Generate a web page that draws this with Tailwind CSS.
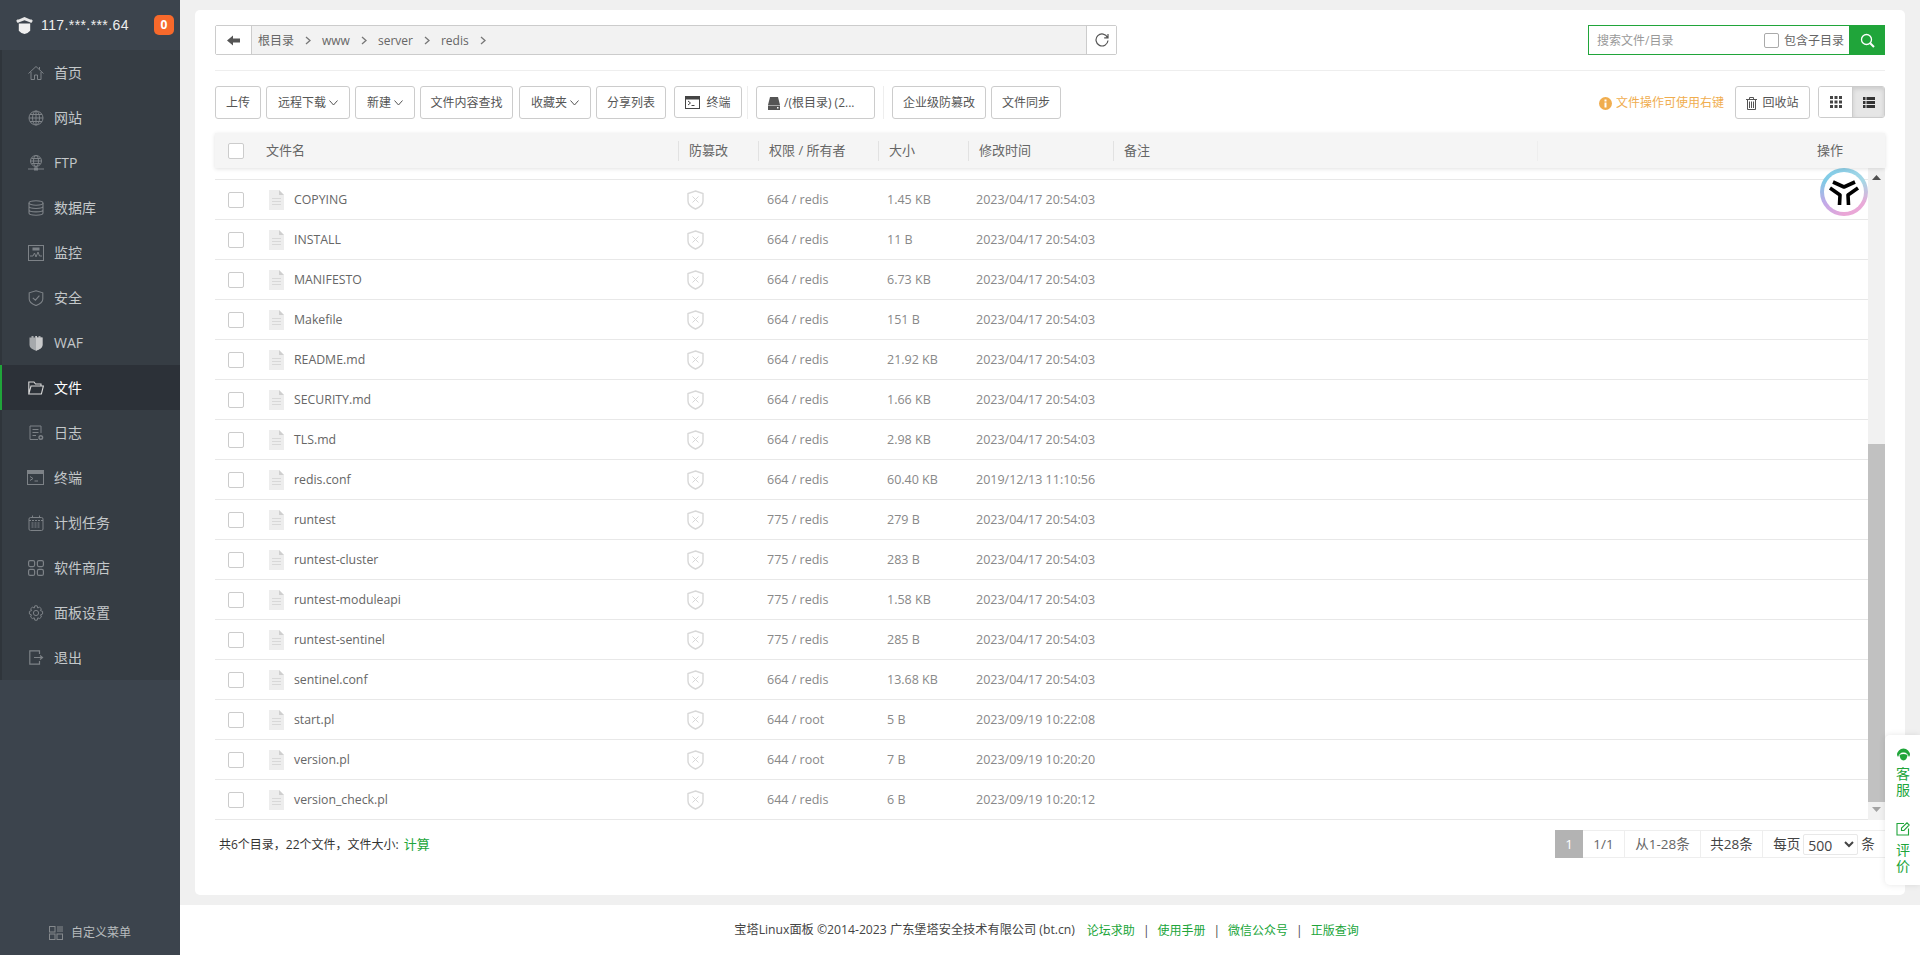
<!DOCTYPE html>
<html lang="en">

<head>
  <meta charset="UTF-8" />
  <title>宝塔Linux面板</title>
  <script src="https://cdn.jsdelivr.net/npm/@tailwindcss/browser@4"></script>
</head>

<body class="h-screen overflow-hidden flex bg-white text-xs text-[#555] font-['Open_Sans','Noto_Sans_CJK_SC',sans-serif]">

  <!-- Sidebar -->
  <aside class="w-[180px] shrink-0 h-full bg-[#3c444d] flex flex-col">
    <div class="h-[50px] flex items-center pl-[15px] bg-[#3c444d]">
      <svg class="w-[19px] h-[19px]" viewBox="0 0 20 20">
        <path d="M1 5 L10 1 L19 5 L17 7 L10 4.5 L3 7 Z" fill="#e8e8e8" />
        <path d="M3 3.5 V7 M17 3.5 V7" stroke="#e8e8e8" />
        <path d="M4 8 H16 V15.5 Q14 18 10 19 Q6 18 4 15.5 Z" fill="#f0f0f0" />
      </svg>
      <span class="ml-[7px] text-sm tracking-[0.4px] text-[#eee] font-['Liberation_Sans',sans-serif]">117.***.***.64</span>
      <span class="ml-auto mr-[6px] w-[20px] h-[20px] rounded-[5px] bg-[#f7692b] text-white text-xs font-bold flex items-center justify-center">0</span>
    </div>

    <nav class="bg-[#363d44] text-sm text-[#c4c8ca]">
      <a class="h-[45px] flex items-center border-l-2 border-[#2f353b] pl-[26px]">
        <svg class="w-[16px] h-[16px] mr-[10px]" viewBox="0 0 16 16" fill="none" stroke="#7d8287" stroke-width="1">
          <path d="M0.5 8.5 L8 1.5 L15.5 8.5 M3 7 V14.5 H6.5 V10 H9.5 V14.5 H13 V7 M11.5 2 V4.5" />
        </svg>首页</a>
      <a class="h-[45px] flex items-center border-l-2 border-[#2f353b] pl-[26px]">
        <svg class="w-[16px] h-[16px] mr-[10px]" viewBox="0 0 16 16" fill="none" stroke="#7d8287" stroke-width="1">
          <circle cx="8" cy="8" r="7" />
          <ellipse cx="8" cy="8" rx="3.5" ry="7" />
          <path d="M8 1 V15 M1 8 H15 M2 4.5 H14 M2 11.5 H14" />
        </svg>网站</a>
      <a class="h-[45px] flex items-center border-l-2 border-[#2f353b] pl-[26px]">
        <svg class="w-[16px] h-[16px] mr-[10px]" viewBox="0 0 16 16" fill="none" stroke="#7d8287" stroke-width="1">
          <circle cx="8" cy="6" r="5.5" />
          <ellipse cx="8" cy="6" rx="2.5" ry="5.5" />
          <path d="M2.5 6 H13.5 M3.5 3.5 H12.5 M3.5 8.5 H12.5 M8 11.5 V13 M0 14 H16" />
          <rect x="6.5" y="13" width="3" height="2" fill="#7d8287" />
        </svg>FTP</a>
      <a class="h-[45px] flex items-center border-l-2 border-[#2f353b] pl-[26px]">
        <svg class="w-[16px] h-[16px] mr-[10px]" viewBox="0 0 16 16" fill="none" stroke="#7d8287" stroke-width="1.1">
          <ellipse cx="8" cy="3" rx="7" ry="2.2" />
          <path d="M1 3 V13 C1 14.2 4 15.2 8 15.2 C12 15.2 15 14.2 15 13 V3 M1 6.3 C1 7.5 4 8.5 8 8.5 C12 8.5 15 7.5 15 6.3 M1 9.7 C1 10.9 4 11.9 8 11.9 C12 11.9 15 10.9 15 9.7" />
        </svg>数据库</a>
      <a class="h-[45px] flex items-center border-l-2 border-[#2f353b] pl-[26px]">
        <svg class="w-[16px] h-[16px] mr-[10px]" viewBox="0 0 16 16" fill="none" stroke="#7d8287" stroke-width="1">
          <rect x="0.5" y="0.5" width="15" height="15" />
          <path d="M2 11 H5 L6.5 8 L8 12 L10 7 L11.5 11 H14" />
          <rect x="5" y="3" width="6" height="2" fill="#7d8287" />
        </svg>监控</a>
      <a class="h-[45px] flex items-center border-l-2 border-[#2f353b] pl-[26px]">
        <svg class="w-[16px] h-[16px] mr-[10px]" viewBox="0 0 16 16" fill="none" stroke="#7d8287" stroke-width="1.1">
          <path d="M8 0.8 L14.8 2.8 V9 Q14.8 13 8 15.6 Q1.2 13 1.2 9 V2.8 Z M4.8 7.8 L7.4 10.2 L11.4 5.6" />
        </svg>安全</a>
      <a class="h-[45px] flex items-center border-l-2 border-[#2f353b] pl-[26px]">
        <svg class="w-[16px] h-[16px] mr-[10px]" viewBox="0 0 16 16">
          <path d="M1.5 2.5 L3.5 2.5 V1 H5.5 V2.5 H7 V1 H9 V2.5 H10.5 V1 H12.5 V2.5 L14.5 2.5 V10 Q14.5 13.5 8 15.8 Q1.5 13.5 1.5 10 Z" fill="#a6a9ac" />
          <path d="M8 1 H9 V2.5 H14.5 V10 Q14.5 13.5 8 15.8 Z" fill="#c9cacb" />
        </svg>WAF</a>
      <a class="h-[45px] flex items-center border-l-2 border-[#20a53a] pl-[26px] bg-[#2c3138] text-white">
        <svg class="w-[16px] h-[16px] mr-[10px]" viewBox="0 0 16 16" fill="none" stroke="#d8d8d8" stroke-width="1.1">
          <path d="M0.8 14 V2 H6 L7.5 4 H13 V6 M0.8 14 L3 6 H15.4 L13.4 14 Z" />
        </svg>文件</a>
      <a class="h-[45px] flex items-center border-l-2 border-[#2f353b] pl-[26px]">
        <svg class="w-[16px] h-[16px] mr-[10px]" viewBox="0 0 16 16" fill="none" stroke="#7d8287" stroke-width="1">
          <path d="M10 14.5 H2 V1 H13 V8 M4.5 4.5 H10.5 M4.5 7.5 H10.5 M4.5 10.5 H8" />
          <circle cx="12.8" cy="12.5" r="1.8" stroke-width="1.4" />
        </svg>日志</a>
      <a class="h-[45px] flex items-center border-l-2 border-[#2f353b] pl-[25px]">
        <svg class="w-[17px] h-[15px] mr-[10px]" viewBox="0 0 17 15" fill="none" stroke="#7d8287" stroke-width="1">
          <rect x="0.5" y="0.5" width="16" height="14" />
          <rect x="0.5" y="0.5" width="16" height="3" fill="#7d8287" />
          <path d="M3 6.5 L6 8.5 L3 10.5 M7.5 11 H11" />
        </svg>终端</a>
      <a class="h-[45px] flex items-center border-l-2 border-[#2f353b] pl-[26px]">
        <svg class="w-[16px] h-[16px] mr-[10px]" viewBox="0 0 16 16" fill="none" stroke="#7d8287" stroke-width="1">
          <rect x="1" y="2.5" width="14" height="13" rx="1.5" />
          <path d="M4.5 0.5 V3.5 M11.5 0.5 V3.5 M1 5.5 H15 M3.5 8 H12.5 M3.5 10 H12.5 M3.5 12 H12.5" stroke-dasharray="2 1" />
        </svg>计划任务</a>
      <a class="h-[45px] flex items-center border-l-2 border-[#2f353b] pl-[26px]">
        <svg class="w-[16px] h-[16px] mr-[10px]" viewBox="0 0 16 16" fill="none" stroke="#7d8287" stroke-width="1.2">
          <rect x="0.6" y="0.6" width="6" height="6" rx="1.5" />
          <rect x="9.4" y="0.6" width="6" height="6" rx="1.5" />
          <rect x="0.6" y="9.4" width="6" height="6" rx="1.5" />
          <rect x="9.4" y="9.4" width="6" height="6" rx="1.5" />
        </svg>软件商店</a>
      <a class="h-[45px] flex items-center border-l-2 border-[#2f353b] pl-[26px]">
        <svg class="w-[16px] h-[16px] mr-[10px]" viewBox="0 0 16 16" fill="none" stroke="#7d8287" stroke-width="1">
          <circle cx="8" cy="8" r="2.6" />
          <path d="M6.8 0.8 H9.2 L9.7 3 L11.6 2.2 L13.4 3.8 L12.4 5.6 L14.6 6.4 V9 L12.6 9.8 L13.4 12 L11.6 13.6 L9.8 12.8 L9.2 15.2 H6.8 L6.2 12.8 L4.4 13.6 L2.6 12 L3.4 9.8 L1.4 9 V6.4 L3.6 5.6 L2.6 3.8 L4.4 2.2 L6.3 3 Z" />
        </svg>面板设置</a>
      <a class="h-[45px] flex items-center border-l-2 border-[#2f353b] pl-[27px]">
        <svg class="w-[15px] h-[15px] mr-[10px]" viewBox="0 0 15 15" fill="none" stroke="#7d8287" stroke-width="1.2">
          <path d="M10.5 4 V0.8 H0.8 V14.2 H10.5 V11 M5 7.5 H13 M11 5.5 L13.5 7.5 L11 9.5" />
        </svg>退出</a>
    </nav>

    <div class="mt-auto h-[44px] flex items-center justify-center text-xs text-[#b8bcbe]">
      <svg class="w-[14px] h-[14px] mr-[8px]" viewBox="0 0 14 14" fill="none" stroke="#85898d" stroke-width="1">
        <rect x="0.5" y="0.5" width="5.5" height="5.5" />
        <rect x="0.5" y="8" width="5.5" height="5.5" />
        <rect x="8" y="8" width="5.5" height="5.5" />
        <path d="M8 1 H14 M8 3 H14 M8 5 H14" />
      </svg>自定义菜单
    </div>
  </aside>

  <!-- Main -->
  <div class="flex-1 min-w-0 flex flex-col">
    <main class="h-[905px] bg-[#f0f0f0] pt-[10px] pl-[15px] pr-[15px] pb-[10px]">
      <div class="h-full bg-white rounded-[5px] px-5 pt-[15px]">

        <!-- Path bar and search -->
        <div class="flex justify-between h-[30px]">
          <div class="w-[902px] flex border border-[#ccc] rounded-[2px] bg-[#f2f2f2]">
            <button class="w-[36px] bg-white border-r border-[#ccc] flex items-center justify-center">
              <svg class="w-[13px] h-[11px]" viewBox="0 0 13 11" fill="#555">
                <path d="M0 5.5 L6 0.5 V3.5 H13 V7.5 H6 V10.5 Z" />
              </svg>
            </button>
            <div class="flex-1 flex items-center pl-[6px] pt-px text-[#666]">
              <span>根目录</span>
              <svg class="w-[6px] h-[9px] mx-[11px]" viewBox="0 0 6 9" fill="none" stroke="#777" stroke-width="1.3"><path d="M1 1 L5 4.5 L1 8" /></svg>
              <span>www</span>
              <svg class="w-[6px] h-[9px] mx-[11px]" viewBox="0 0 6 9" fill="none" stroke="#777" stroke-width="1.3"><path d="M1 1 L5 4.5 L1 8" /></svg>
              <span>server</span>
              <svg class="w-[6px] h-[9px] mx-[11px]" viewBox="0 0 6 9" fill="none" stroke="#777" stroke-width="1.3"><path d="M1 1 L5 4.5 L1 8" /></svg>
              <span>redis</span>
              <svg class="w-[6px] h-[9px] mx-[11px]" viewBox="0 0 6 9" fill="none" stroke="#777" stroke-width="1.3"><path d="M1 1 L5 4.5 L1 8" /></svg>
            </div>
            <button class="w-[30px] bg-white border-l border-[#ccc] flex items-center justify-center">
              <svg class="w-[14px] h-[14px]" viewBox="0 0 14 14" fill="none" stroke="#555" stroke-width="1.2">
                <path d="M12.5 4.5 A6 6 0 1 0 13 7.5 M13 1 V4.8 H9.2" />
              </svg>
            </button>
          </div>

          <div class="w-[297px] flex">
            <div class="flex-1 flex items-center border border-[#20a53a] border-r-0 pl-[8px] pt-px">
              <span class="flex-1 text-[#999]">搜索文件/目录</span>
              <span class="w-[15px] h-[15px] border border-[#aaa] rounded-[2px] bg-white mr-[5px]"></span>
              <span class="mr-[5px] text-[#666]">包含子目录</span>
            </div>
            <button class="w-[36px] bg-[#20a53a] flex items-center justify-center">
              <svg class="w-[15px] h-[15px]" viewBox="0 0 15 15" fill="none" stroke="#fff" stroke-width="1.3">
                <circle cx="6.5" cy="6.5" r="5" />
                <path d="M10.2 10.2 L14 14" stroke-width="2" />
              </svg>
            </button>
          </div>
        </div>

        <div class="mt-[15px] border-t border-[#eee]"></div>

        <!-- Toolbar -->
        <div class="mt-[15px] h-[33px] flex items-stretch">
          <button class="w-[46px] pt-px border border-[#ccc] rounded-[3px] bg-white text-[#555]">上传</button>
          <button class="ml-[5px] w-[84px] pt-px border border-[#ccc] rounded-[3px] bg-white text-[#555] flex items-center justify-center">远程下载
            <svg class="w-[9px] h-[6px] ml-[3px]" viewBox="0 0 9 6" fill="none" stroke="#555"><path d="M0.5 0.5 L4.5 5 L8.5 0.5" /></svg>
          </button>
          <button class="ml-[5px] w-[60px] pt-px border border-[#ccc] rounded-[3px] bg-white text-[#555] flex items-center justify-center">新建
            <svg class="w-[9px] h-[6px] ml-[3px]" viewBox="0 0 9 6" fill="none" stroke="#555"><path d="M0.5 0.5 L4.5 5 L8.5 0.5" /></svg>
          </button>
          <button class="ml-[5px] w-[93px] pt-px border border-[#ccc] rounded-[3px] bg-white text-[#555]">文件内容查找</button>
          <button class="ml-[6px] w-[72px] pt-px border border-[#ccc] rounded-[3px] bg-white text-[#555] flex items-center justify-center">收藏夹
            <svg class="w-[9px] h-[6px] ml-[3px]" viewBox="0 0 9 6" fill="none" stroke="#555"><path d="M0.5 0.5 L4.5 5 L8.5 0.5" /></svg>
          </button>
          <button class="ml-[5px] w-[70px] pt-px border border-[#ccc] rounded-[3px] bg-white text-[#555]">分享列表</button>
          <button class="ml-[8px] w-[68px] h-[32px] pt-px border border-[#ccc] rounded-[3px] bg-white text-[#555] flex items-center justify-center">
            <svg class="w-[15px] h-[13px] mr-[6px]" viewBox="0 0 15 13" fill="none" stroke="#444">
              <rect x="0.5" y="0.5" width="14" height="12" />
              <rect x="0.5" y="0.5" width="14" height="2.5" fill="#444" />
              <path d="M3 5 L5.5 7 L3 9 M6.5 9.5 H9.5" />
            </svg>终端
          </button>
          <span class="ml-[5px] border-l border-[#eee]"></span>
          <button class="ml-[8px] w-[119px] pt-px border border-[#ccc] rounded-[3px] bg-white text-[#555] flex items-center pl-[11px]">
            <svg class="w-[12px] h-[13px] mr-[4px]" viewBox="0 0 12 13" fill="#555">
              <path d="M2 0 H10 L12 8 H0 Z M0 8.5 H12 V13 H0 Z" />
              <rect x="9" y="10" width="1.5" height="1.5" fill="#fff" />
            </svg>/(根目录) (2...
          </button>
          <span class="ml-[8px] border-l border-[#eee]"></span>
          <button class="ml-[8px] w-[94px] pt-px border border-[#ccc] rounded-[3px] bg-white text-[#555]">企业级防篡改</button>
          <button class="ml-[5px] w-[70px] pt-px border border-[#ccc] rounded-[3px] bg-white text-[#555]">文件同步</button>

          <span class="ml-auto pt-px flex items-center text-[#f0ad4e]">
            <svg class="w-[13px] h-[13px] mr-[4px]" viewBox="0 0 13 13">
              <circle cx="6.5" cy="6.5" r="6.5" fill="#f0ad4e" />
              <rect x="5.5" y="2.5" width="2" height="2" fill="#fff" />
              <rect x="5.5" y="5.5" width="2" height="5" fill="#fff" />
            </svg>文件操作可使用右键
          </span>
          <button class="ml-[11px] w-[75px] pt-px border border-[#ccc] rounded-[3px] bg-white text-[#555] flex items-center justify-center">
            <svg class="w-[11px] h-[13px] mr-[5px]" viewBox="0 0 11 13" fill="none" stroke="#555">
              <path d="M0 2.5 H11 M3.5 2.5 V0.5 H7.5 V2.5 M1.5 2.5 V12.5 H9.5 V2.5 M3.5 4.5 V11 M5.5 4.5 V11 M7.5 4.5 V11" />
            </svg>回收站
          </button>
          <div class="ml-[8px] w-[67px] h-[32px] flex border border-[#ccc] rounded-[3px] overflow-hidden">
            <span class="w-[33px] bg-white flex items-center justify-center">
              <svg class="w-[12px] h-[12px]" viewBox="0 0 12 12" fill="#444">
                <rect width="3" height="3" /><rect x="4.5" width="3" height="3" /><rect x="9" width="3" height="3" />
                <rect y="4.5" width="3" height="3" /><rect x="4.5" y="4.5" width="3" height="3" /><rect x="9" y="4.5" width="3" height="3" />
                <rect y="9" width="3" height="3" /><rect x="4.5" y="9" width="3" height="3" /><rect x="9" y="9" width="3" height="3" />
              </svg>
            </span>
            <span class="flex-1 bg-[#e6e6e6] border-l border-[#ccc] shadow-[inset_0_2px_4px_rgba(0,0,0,0.12)] flex items-center justify-center">
              <svg class="w-[12px] h-[11px]" viewBox="0 0 12 11" fill="#333">
                <rect width="2.5" height="3" /><rect x="3.5" width="8.5" height="3" />
                <rect y="4" width="2.5" height="3" /><rect x="3.5" y="4" width="8.5" height="3" />
                <rect y="8" width="2.5" height="3" /><rect x="3.5" y="8" width="8.5" height="3" />
              </svg>
            </span>
          </div>
        </div>

        <!-- Table header -->
        <div class="relative z-10 mt-[14px] h-[35px] pt-px flex items-center bg-[#f5f5f5] text-[13px] text-[#666] shadow-[0_1px_4px_rgba(0,0,0,0.12)]">
          <div class="w-[463px] flex items-center pl-[13px]">
            <span class="w-[16px] h-[16px] border border-[#ccc] rounded-[2px] bg-white"></span>
            <span class="ml-[22px]">文件名</span>
          </div>
          <div class="w-[80px] h-[20px] flex items-center border-l border-[#e2e2e2] pl-[10px]">防篡改</div>
          <div class="w-[120px] h-[20px] flex items-center border-l border-[#e2e2e2] pl-[10px]">权限 / 所有者</div>
          <div class="w-[90px] h-[20px] flex items-center border-l border-[#e2e2e2] pl-[10px]">大小</div>
          <div class="w-[145px] h-[20px] flex items-center border-l border-[#e2e2e2] pl-[10px]">修改时间</div>
          <div class="w-[424px] h-[20px] flex items-center border-l border-[#e2e2e2] pl-[10px]">备注</div>
          <div class="flex-1 h-[20px] flex items-center justify-end border-l border-[#eee] pr-[42px]">操作</div>
        </div>

        <!-- File rows -->
        <div class="relative h-[652px] flex overflow-hidden">
          <div class="flex-1 min-w-0 overflow-hidden">
            <div class="h-[12px] border-b border-[#e8e8e8] overflow-hidden"></div>
            <div id="rows"></div>
          </div>
          <div class="w-[17px] bg-[#f1f1f1] flex flex-col items-center">
            <svg class="mt-[7px] w-[9px] h-[5px]" viewBox="0 0 9 5" fill="#505050"><path d="M4.5 0 L9 5 H0 Z" /></svg>
            <div class="mt-[264px] w-full h-[358px] bg-[#c1c1c1]"></div>
            <svg class="mt-[5px] w-[9px] h-[5px]" viewBox="0 0 9 5" fill="#a3a3a3"><path d="M0 0 H9 L4.5 5 Z" /></svg>
          </div>
          <!-- floating assistant logo -->
          <div class="absolute left-[1605px] top-[0px] w-[48px] h-[48px] rounded-full bg-[conic-gradient(#8fd0e8,#a6d8e6,#e9a9d8,#eaa6d6,#c2a9e8,#7fcbe6,#8fd0e8)] flex items-center justify-center">
            <div class="w-[40px] h-[40px] rounded-full bg-white"></div>
            <svg class="absolute w-[48px] h-[48px]" viewBox="0 0 48 48" fill="none" stroke="#000" stroke-width="3.6" stroke-linejoin="round">
              <path d="M13 14 L24 19 L35 14" />
              <path d="M10 20 L20 27 L19.5 37" />
              <path d="M38 20 L28 27 L28.5 37" />
            </svg>
          </div>
        </div>

        <!-- Table footer -->
        <div class="mt-[10px] h-[28px] flex items-center justify-between">
          <div class="pl-[4px] pt-px text-[#333]">共6个目录，22个文件，文件大小:<span class="ml-[5px] text-[13px] text-[#20a53a]">计算</span></div>
          <div class="h-[28px] flex items-stretch text-[13.5px] text-[#666] border-y border-[#eee]">
            <span class="w-[28px] -my-px bg-[#b3b3b3] text-white flex items-center justify-center">1</span>
            <span class="w-[42px] flex items-center justify-center border-r border-[#eee]">1/1</span>
            <span class="w-[76px] flex items-center justify-center border-r border-[#eee]">从1-28条</span>
            <span class="w-[62px] flex items-center justify-center border-r border-[#eee] text-[#444]">共28条</span>
            <span class="w-[122px] flex items-center justify-center text-[#444]">每页
              <select class="mx-[3px] w-[55px] h-[21px] border border-[#e8e8e8] rounded-[2px] bg-white text-sm text-[#444]">
                <option>500</option>
              </select>条</span>
          </div>
        </div>
      </div>
    </main>

    <footer class="h-[50px] pt-px pr-[7px] bg-white flex items-center justify-center text-xs text-[#444]">
      <span class="text-[12.2px]">宝塔Linux面板 ©2014-2023 广东堡塔安全技术有限公司 (bt.cn)</span>
      <a class="ml-[12px] text-[#20a53a]">论坛求助</a>
      <span class="mx-[8px]">|</span>
      <a class="text-[#20a53a]">使用手册</a>
      <span class="mx-[8px]">|</span>
      <a class="text-[#20a53a]">微信公众号</a>
      <span class="mx-[8px]">|</span>
      <a class="text-[#20a53a]">正版查询</a>
    </footer>
  </div>

  <!-- Floating service panel -->
  <div class="absolute right-0 top-[735px] w-[35px] h-[150px] pl-[1px] bg-white rounded-l-[5px] shadow-[0_0_6px_rgba(0,0,0,0.1)] flex flex-col items-center text-sm leading-[16px] text-[#20a53a] pt-[12px]">
    <svg class="w-[15px] h-[15px]" viewBox="0 0 15 15">
      <path d="M1 8 A6.5 6.5 0 0 1 14 8 L13 10 Q11 5 7.5 5.5 Q4 5 2 10 Z" fill="#20a53a" />
      <path d="M3.5 8 Q7.5 6 11.5 8 Q11 13 7.5 13.5 Q4 13 3.5 8 Z" fill="#20a53a" />
    </svg>
    <span class="mt-[4px] text-center w-[14px]">客服</span>
    <svg class="mt-[24px] w-[14px] h-[14px]" viewBox="0 0 14 14" fill="none" stroke="#20a53a" stroke-width="1.1">
      <path d="M8 1.5 H1 V13 H12.5 V6.5 M5.5 8.5 V6 L11 0.8 L13.2 3 L8 8.5 Z" />
    </svg>
    <span class="mt-[6px] text-center w-[14px]">评价</span>
  </div>

  <script>
    const files = [
      ['COPYING', '664 / redis', '1.45 KB', '2023/04/17 20:54:03'],
      ['INSTALL', '664 / redis', '11 B', '2023/04/17 20:54:03'],
      ['MANIFESTO', '664 / redis', '6.73 KB', '2023/04/17 20:54:03'],
      ['Makefile', '664 / redis', '151 B', '2023/04/17 20:54:03'],
      ['README.md', '664 / redis', '21.92 KB', '2023/04/17 20:54:03'],
      ['SECURITY.md', '664 / redis', '1.66 KB', '2023/04/17 20:54:03'],
      ['TLS.md', '664 / redis', '2.98 KB', '2023/04/17 20:54:03'],
      ['redis.conf', '664 / redis', '60.40 KB', '2019/12/13 11:10:56'],
      ['runtest', '775 / redis', '279 B', '2023/04/17 20:54:03'],
      ['runtest-cluster', '775 / redis', '283 B', '2023/04/17 20:54:03'],
      ['runtest-moduleapi', '775 / redis', '1.58 KB', '2023/04/17 20:54:03'],
      ['runtest-sentinel', '775 / redis', '285 B', '2023/04/17 20:54:03'],
      ['sentinel.conf', '664 / redis', '13.68 KB', '2023/04/17 20:54:03'],
      ['start.pl', '644 / root', '5 B', '2023/09/19 10:22:08'],
      ['version.pl', '644 / root', '7 B', '2023/09/19 10:20:20'],
      ['version_check.pl', '644 / redis', '6 B', '2023/09/19 10:20:12'],
    ];

    document.getElementById('rows').innerHTML = files.map(f => `
      <div class="h-[40px] flex items-center border-b border-[#e8e8e8] text-[12.5px] text-[#888]">
        <div class="w-[463px] flex items-center pl-[13px]">
          <span class="w-[16px] h-[16px] border border-[#ccc] rounded-[2px] bg-white"></span>
          <svg class="ml-[25px] w-[15px] h-[20px]" viewBox="0 0 15 20">
            <path d="M0 0 H10 L15 5 V20 H0 Z" fill="#ededed" />
            <path d="M10 0 L15 5 H10 Z" fill="#cfcfcf" />
            <path d="M3 8.5 H12 M3 11.5 H12 M3 14.5 H12" stroke="#d8d8d8" />
          </svg>
          <span class="ml-[10px] pt-[2px] text-[12.3px] text-[#666]">${f[0]}</span>
        </div>
        <div class="w-[80px] pl-[9px]">
          <svg class="w-[17px] h-[20px]" viewBox="0 0 17 20" fill="none" stroke="#d8d8d8" stroke-width="1.4">
            <path d="M8.5 1 L16 3.5 V11 Q16 16 8.5 19 Q1 16 1 11 V3.5 Z" />
            <path d="M5.5 6.5 L11.5 12.5 M11.5 6.5 L5.5 12.5" stroke-width="1" />
          </svg>
        </div>
        <div class="w-[120px] pl-[9px] pt-[2px]">${f[1]}</div>
        <div class="w-[90px] pl-[9px] pt-[2px]">${f[2]}</div>
        <div class="pl-[8px] pt-[2px]">${f[3]}</div>
      </div>
    `).join('');
  </script>
</body>

</html>
